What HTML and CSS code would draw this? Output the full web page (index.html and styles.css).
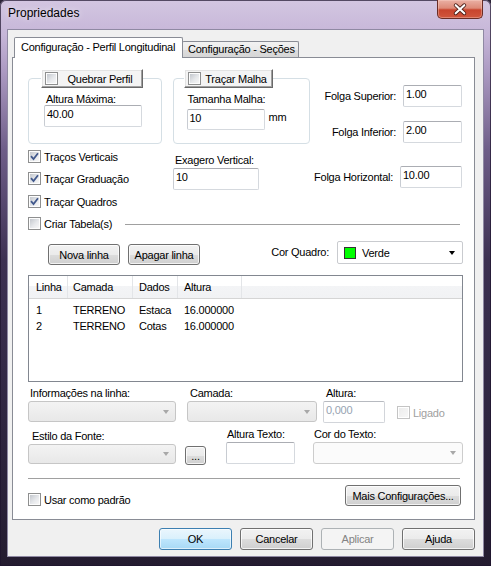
FILE: index.html
```html
<!DOCTYPE html>
<html lang="pt">
<head>
<meta charset="utf-8">
<title>Propriedades</title>
<link rel="stylesheet" href="styles.css">
</head>
<body>
<div class="window">
  <div class="titlebar">
    <span class="title">Propriedades</span>
    <div class="close">
      <svg width="46" height="19" viewBox="0 0 46 19">
        <path d="M18.5 5 L27.5 13.5 M27.5 5 L18.5 13.5" stroke="#4a1d16" stroke-width="4" stroke-linecap="round" fill="none"/>
        <path d="M18.5 5 L27.5 13.5 M27.5 5 L18.5 13.5" stroke="#ffffff" stroke-width="2.2" stroke-linecap="round" fill="none"/>
      </svg>
    </div>
  </div>
  <div class="client">
    <div class="tabs">
      <div class="tab active">Configuração - Perfil Longitudinal</div>
      <div class="tab inactive">Configuração - Seções</div>
    </div>
    <div class="panel">
      <div class="sec-a">
        <div class="col-left">
          <div class="groups">
            <div class="group g1">
              <div class="legend l1"><span class="cb"></span><span class="legend-text">Quebrar Perfil</span></div>
              <div class="lbl g1-lbl">Altura Máxima:</div>
              <div class="tb g1-tb">40.00</div>
            </div>
            <div class="group g2">
              <div class="legend l2"><span class="cb"></span><span class="legend-text">Traçar Malha</span></div>
              <div class="lbl g2-lbl">Tamanha Malha:</div>
              <div class="tb-row"><div class="tb g2-tb">10</div><span class="unit">mm</span></div>
            </div>
          </div>
          <div class="mid">
            <div class="checks">
              <div class="chk"><span class="cb"><svg class="tick" width="9" height="9" viewBox="0 0 9 9"><path d="M1 4.2 L3.5 7 L8 1.2" stroke="#42598c" stroke-width="1.8" fill="none"/></svg></span>Traços Verticais</div>
              <div class="chk r2"><span class="cb"><svg class="tick" width="9" height="9" viewBox="0 0 9 9"><path d="M1 4.2 L3.5 7 L8 1.2" stroke="#42598c" stroke-width="1.8" fill="none"/></svg></span>Traçar Graduação</div>
              <div class="chk r3"><span class="cb"><svg class="tick" width="9" height="9" viewBox="0 0 9 9"><path d="M1 4.2 L3.5 7 L8 1.2" stroke="#42598c" stroke-width="1.8" fill="none"/></svg></span>Traçar Quadros</div>
            </div>
            <div class="exag">
              <div class="lbl exag-lbl">Exagero Vertical:</div>
              <div class="tb exag-tb">10</div>
            </div>
          </div>
        </div>
        <div class="col-right">
          <span class="flbl">Folga Superior:</span><div class="tb ftb">1.00</div>
          <span class="flbl">Folga Inferior:</span><div class="tb ftb">2.00</div>
          <span class="flbl fh">Folga Horizontal:</span><div class="tb ftb fhtb">10.00</div>
        </div>
      </div>

      <div class="criar"><span class="cb"></span><span class="criar-text">Criar Tabela(s)</span><span class="hline"></span></div>

      <div class="btn-row">
        <div class="btn b-nova">Nova linha</div>
        <div class="btn b-apagar">Apagar linha</div>
        <span class="cq-label">Cor Quadro:</span>
        <div class="combo-cq"><span class="swatch"></span><span class="cq-text">Verde</span><span class="arrow dark"></span></div>
      </div>

      <div class="list">
        <div class="lv-head">
          <div class="hc c1">Linha</div><div class="hc c2">Camada</div><div class="hc c3">Dados</div><div class="hc c4">Altura</div><div class="hc c5"></div>
        </div>
        <div class="lv-row first">
          <div class="c1">1</div><div class="c2">TERRENO</div><div class="c3">Estaca</div><div class="c4">16.000000</div>
        </div>
        <div class="lv-row">
          <div class="c1">2</div><div class="c2">TERRENO</div><div class="c3">Cotas</div><div class="c4">16.000000</div>
        </div>
      </div>

      <div class="fields1">
        <div class="f1">
          <div class="lbl fl1">Informações na linha:</div>
          <div class="combo dis h21"><span class="arrow"></span></div>
        </div>
        <div class="f2">
          <div class="lbl fl2">Camada:</div>
          <div class="combo dis h21"><span class="arrow"></span></div>
        </div>
        <div class="f3">
          <div class="lbl fl2">Altura:</div>
          <div class="tb dis-tb">0,000</div>
        </div>
        <div class="ligado"><span class="cb disabled"></span><span class="lig-text">Ligado</span></div>
      </div>

      <div class="fields2">
        <div class="f4">
          <div class="lbl fl4">Estilo da Fonte:</div>
          <div class="combo dis h20"><span class="arrow"></span></div>
        </div>
        <div class="btn dots">...</div>
        <div class="f5">
          <div class="lbl fl5">Altura Texto:</div>
          <div class="tb f5-tb"></div>
        </div>
        <div class="f6">
          <div class="lbl fl5">Cor do Texto:</div>
          <div class="combo dis white h22"><span class="arrow"></span></div>
        </div>
      </div>

      <div class="sep"></div>

      <div class="foot">
        <div class="chk usar"><span class="cb"></span>Usar como padrão</div>
        <div class="btn b-mais">Mais Configurações...</div>
      </div>
    </div>

    <div class="dlg-btns">
      <div class="btn dbtn ok">OK</div>
      <div class="btn dbtn">Cancelar</div>
      <div class="btn dbtn disabled-btn">Aplicar</div>
      <div class="btn dbtn">Ajuda</div>
    </div>
  </div>
</div>
</body>
</html>
```

FILE: styles.css
```css
* { box-sizing: border-box; }
html, body { margin: 0; padding: 0; }
body {
  width: 491px;
  height: 566px;
  overflow: hidden;
  background: #2c2438;
  font-family: "Liberation Sans", Arial, sans-serif;
  font-size: 11px;
  letter-spacing: -0.25px;
  color: #000;
}

.window {
  width: 491px;
  height: 566px;
  padding: 0 7px;
  display: flex;
  flex-direction: column;
  border-radius: 6px 6px 0 0;
  background: linear-gradient(180deg, #d3c6e1 0px, #c6b6d8 35px, #ad9bc3 70px, #6e5d88 150px, #3d3152 260px, #2f2641 420px, #241c30 566px);
  box-shadow: inset 0 0 0 1px rgba(30, 20, 45, 0.7);
}

/* title bar */
.titlebar {
  height: 29px;
  display: flex;
  align-items: flex-start;
  flex: none;
}
.title {
  padding: 5px 0 0 1px;
  font-size: 12px;
  line-height: 16px;
  letter-spacing: 0;
  color: #000;
  text-shadow: 0 0 6px rgba(255, 255, 255, 0.8);
}
.close {
  margin-left: auto;
  margin-right: 1px;
  width: 46px;
  height: 19px;
  border: 1px solid #6a2c25;
  border-top: none;
  border-radius: 0 0 5px 5px;
  background: linear-gradient(180deg, #eab0a4 0%, #dd8a78 45%, #c8442d 55%, #d0563d 100%);
  box-shadow: inset 0 0 0 1px rgba(255, 220, 210, 0.35);
  display: flex;
}

/* client area */
.client {
  height: 528px;
  flex: none;
  background: #f0f0f0;
  border: 1px solid #8f89a3;
  display: flex;
  flex-direction: column;
  padding: 0 8px 0 4px;
}

.tabs {
  height: 27px;
  flex: none;
  display: flex;
  align-items: flex-end;
  padding-left: 2px;
}
.tab {
  border: 1px solid #898c95;
  border-bottom: none;
  border-radius: 2px 2px 0 0;
  white-space: nowrap;
  line-height: 14px;
}
.tab.active {
  width: 169px;
  height: 21px;
  margin-bottom: -1px;
  background: #fff;
  position: relative;
  z-index: 1;
  padding: 2px 0 0 6px;
}
.tab.inactive {
  width: 117px;
  height: 16px;
  margin-left: -1px;
  padding: 0 0 0 5px;
  background: linear-gradient(180deg, #f2f2f2 0%, #ebebeb 50%, #dddddd 50%, #d6d6d6 100%);
}

.panel {
  height: 463px;
  flex: none;
  background: #fff;
  border: 1px solid #898c95;
  padding: 0 0 0 15px;
}

.lbl { line-height: 12px; white-space: nowrap; }

.tb {
  height: 22px;
  line-height: 17px;
  padding-left: 2px;
  background: #fff;
  border: 1px solid #d5d9de;
  border-top-color: #abadb3;
  border-left-color: #c8ccd2;
  border-radius: 2px;
  white-space: nowrap;
}

/* section A */
.sec-a { display: flex; padding-top: 11px; }
.col-left { width: 282px; flex: none; }
.groups { display: flex; gap: 11px; }
.group {
  margin-top: 9px;
  height: 66px;
  border: 1px solid #d5dfe5;
  border-radius: 4px;
}
.g1 { width: 134px; }
.g2 { width: 138px; }

.legend {
  display: flex;
  align-items: center;
  height: 19px;
  margin-top: -10px;
  padding-left: 3px;
  background: #f4f4f4;
  border: 1px solid;
  border-color: #ffffff #696969 #696969 #ffffff;
  box-shadow: inset -1px -1px 0 #a0a0a0, inset 1px 1px 0 #e3e3e3;
}
.legend-text { flex: 1; text-align: center; white-space: nowrap; }
.l1 { width: 102px; margin-left: 12px; }
.l2 { width: 89px; margin-left: 10px; }

.g1-lbl { margin: 5px 0 0 17px; }
.g1-tb { width: 98px; margin-left: 15px; }
.g2-lbl { margin: 5px 0 0 14px; }
.tb-row { display: flex; margin: 4px 0 0 13px; align-items: flex-start; }
.g2-tb { width: 78px; height: 21px; }
.unit { margin: 2px 0 0 4px; line-height: 12px; }

.mid { display: flex; }
.checks { width: 145px; flex: none; padding-top: 6px; display: flex; flex-direction: column; }
.chk { display: flex; align-items: center; height: 13px; gap: 3px; white-space: nowrap; }
.chk.r2 { margin-top: 9px; }
.chk.r3 { margin-top: 10px; }
.exag { padding-top: 10px; }
.exag-lbl { margin-left: 2px; }
.exag-tb { width: 86px; margin-top: 2px; }

.col-right {
  margin-left: auto;
  margin-right: 12px;
  margin-top: 16px;
  align-self: flex-start;
  display: grid;
  grid-template-columns: auto 62px;
  column-gap: 4px;
  row-gap: 14px;
  align-items: center;
}
.flbl { justify-self: end; white-space: nowrap; }
.ftb { width: 59px; justify-self: end; }
.fh { margin-top: 9px; margin-right: 3px; }
.fhtb { width: 62px; margin-top: 9px; }

/* checkbox */
.cb {
  width: 13px;
  height: 13px;
  flex: none;
  display: inline-flex;
  border: 1px solid #8e8f8f;
  padding: 1px;
  background: linear-gradient(135deg, #c3c7cd 0%, #e6e8eb 55%, #f7f7f7 100%) content-box, linear-gradient(#fdfdfd, #fdfdfd) padding-box;
}
.cb .tick { overflow: visible; }
.cb.disabled {
  border-color: #c4c4c4;
  background: linear-gradient(135deg, #ececec, #f7f7f7) content-box, linear-gradient(#fff, #fff) padding-box;
}

/* criar tabela */
.criar { display: flex; align-items: center; height: 13px; margin-top: 9px; margin-right: 14px; }
.criar-text { margin-left: 3px; white-space: nowrap; }
.hline { flex: 1; height: 1px; background: #a0a0a0; margin: 2px 0 0 13px; }

/* buttons */
.btn {
  height: 21px;
  border: 1px solid #707070;
  border-radius: 3px;
  background: linear-gradient(180deg, #f2f2f2 0%, #ebebeb 50%, #dddddd 50%, #cfcfcf 100%);
  box-shadow: inset 0 0 0 1px rgba(255, 255, 255, 0.75);
  display: flex;
  align-items: center;
  justify-content: center;
  white-space: nowrap;
}
.btn-row { display: flex; align-items: flex-start; margin-top: 11px; padding-right: 11px; }
.b-nova { width: 72px; margin: 3px 0 0 20px; }
.b-apagar { width: 72px; margin: 3px 0 0 8px; }
.cq-label { margin-left: auto; margin-right: 8px; line-height: 23px; }
.combo-cq {
  width: 126px;
  height: 23px;
  border: 1px solid #c9cbcf;
  border-radius: 2px;
  background: #fff;
  display: flex;
  align-items: center;
  padding: 0 5px 0 6px;
}
.swatch { width: 12px; height: 12px; background: #00ff00; border: 1px solid #333; flex: none; }
.cq-text { margin-left: 6px; flex: 1; }
.arrow {
  width: 0;
  height: 0;
  border-left: 3.5px solid transparent;
  border-right: 3.5px solid transparent;
  border-top: 4px solid #a8a8a8;
}
.arrow.dark { border-top-color: #000; margin-right: 2px; }

/* list view */
.list {
  margin-top: 10px;
  margin-right: 11px;
  height: 107px;
  border: 1px solid #828790;
  background: #fff;
}
.lv-head {
  display: grid;
  grid-template-columns: 39px 65px 45px 64px 1fr;
  height: 23px;
  border-bottom: 1px solid #d5d5d5;
  background: linear-gradient(180deg, #ffffff 0%, #ffffff 45%, #f3f4f6 45%, #f1f2f4 100%);
}
.hc { line-height: 22px; border-right: 1px solid #e3e5e8; white-space: nowrap; }
.hc.c5 { border-right: none; }
.lv-row {
  display: grid;
  grid-template-columns: 39px 65px 45px 64px;
  line-height: 16px;
  white-space: nowrap;
}
.lv-row.first { margin-top: 3px; }
.c1 { padding-left: 7px; }
.c2 { padding-left: 5px; }
.c3 { padding-left: 6px; }
.c4 { padding-left: 6px; }

/* lower fields */
.fields1 { display: flex; align-items: flex-start; margin-top: 5px; }
.f1 { width: 148px; flex: none; }
.f2 { width: 130px; flex: none; margin-left: 11px; }
.f3 { width: 62px; flex: none; margin-left: 6px; }
.fl1 { margin-left: 2px; }
.fl2 { margin-left: 3px; }
.combo {
  margin-top: 2px;
  border: 1px solid #c6c6c6;
  border-radius: 3px;
  background: linear-gradient(180deg, #f3f3f3, #e8e8e8);
  display: flex;
  align-items: center;
  justify-content: flex-end;
  padding-right: 6px;
}
.combo.white { background: #fbfbfb; border-color: #cdcdcd; }
.h20 { height: 20px; }
.h21 { height: 21px; }
.h22 { height: 22px; }
.dis-tb { margin-top: 2px; color: #97a3b2; border-color: #d2d5da; border-top-color: #b7bac0; }
.ligado { display: flex; align-items: center; gap: 3px; height: 13px; margin: 19px 0 0 12px; }
.lig-text { color: #a0a0a0; }

.fields2 { display: flex; align-items: flex-start; margin-top: 5px; }
.f4 { width: 148px; flex: none; padding-top: 2px; }
.fl4 { margin-left: 4px; }
.dots { width: 21px; height: 19px; margin: 18px 0 0 9px; align-items: flex-end; padding-bottom: 3px; line-height: 10px; }
.f5 { width: 69px; flex: none; margin-left: 20px; }
.fl5 { margin-left: 1px; }
.f5-tb { margin-top: 2px; }
.f6 { width: 150px; flex: none; margin-left: 18px; }

.sep { height: 1px; background: #a0a0a0; margin: 13px 14px 0 0; }

.foot { display: flex; align-items: flex-start; padding-right: 13px; }
.usar { margin-top: 14px; }
.b-mais { width: 116px; margin: 6px 0 0 auto; }

/* dialog buttons */
.dlg-btns { display: flex; justify-content: flex-end; gap: 8px; margin-top: 8px; }
.dbtn { width: 73px; height: 22px; }
.ok {
  border-color: #3c7fb1;
  background: linear-gradient(180deg, #eaf6fd 0%, #d9f0fc 50%, #bee6fd 50%, #a7d9f5 100%);
  box-shadow: inset 0 0 0 1px rgba(255, 255, 255, 0.6);
}
.disabled-btn {
  border-color: #adb2b5;
  background: #f4f4f4;
  color: #838383;
  box-shadow: none;
}
```
